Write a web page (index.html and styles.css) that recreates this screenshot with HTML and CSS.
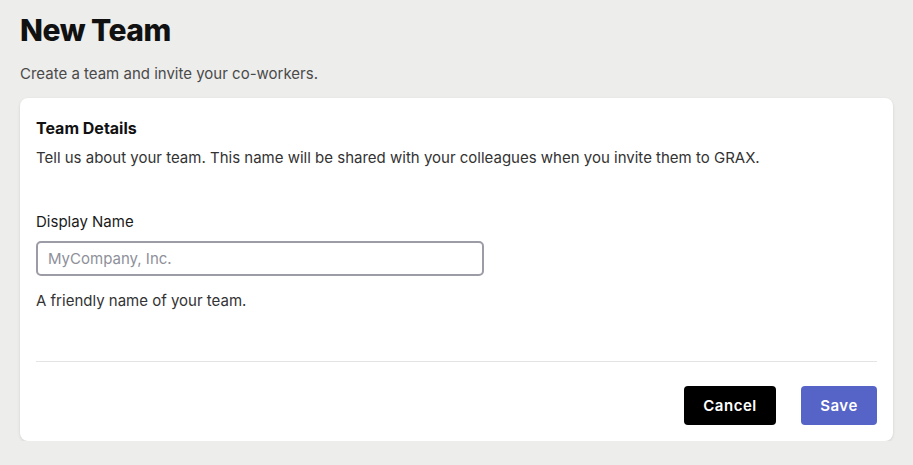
FILE: index.html
```html
<!DOCTYPE html>
<html>
<head>
<meta charset="utf-8">
<link rel="stylesheet" href="styles.css">
</head>
<body>
<main class="page">
  <h1 class="title">New Team</h1>
  <p class="subtitle">Create a team and invite your co-workers.</p>
  <section class="card">
    <h2 class="card-title">Team Details</h2>
    <p class="card-desc">Tell us about your team. This name will be shared with your colleagues when you invite them to GRAX.</p>
    <div class="field">
      <label class="label" for="name">Display Name</label>
      <input class="input" id="name" type="text" placeholder="MyCompany, Inc.">
      <p class="help">A friendly name of your team.</p>
    </div>
    <div class="divider"></div>
    <div class="actions">
      <button class="btn btn-cancel">Cancel</button>
      <button class="btn btn-save">Save</button>
    </div>
  </section>
</main>
</body>
</html>
```
FILE: styles.css
```css
* { box-sizing: border-box; }
html, body { margin: 0; padding: 0; }
body {
  background: #ededec;
  font-family: Inter, "Noto Sans", sans-serif;
  color: #1a1a1a;
}
.page {
  padding: 12px 20px 0 20px;
}
.title {
  margin: 0;
  font-size: 30px;
  font-weight: 800;
  letter-spacing: -0.5px;
  line-height: 36px;
  color: #111;
}
.subtitle {
  margin: 16px 0 0 0;
  font-size: 15px;
  line-height: 20px;
  color: #4a4a4a;
}
.card {
  margin-top: 14px;
  background: #fff;
  border-radius: 8px;
  box-shadow: 0 1px 3px rgba(0,0,0,0.12);
  padding: 19px 16px 16px 16px;
}
.card-title {
  margin: 0;
  font-size: 16px;
  font-weight: 700;
  line-height: 22px;
  color: #111;
}
.card-desc {
  margin: 9px 0 0 0;
  font-size: 15px;
  line-height: 20px;
  color: #333;
}
.field {
  margin-top: 44px;
  display: flex;
  flex-direction: column;
  align-items: flex-start;
}
.label {
  font-size: 15px;
  line-height: 20px;
  color: #1a1a1a;
}
.input {
  margin-top: 9px;
  width: 448px;
  height: 35px;
  border: 2px solid #9b9ca6;
  border-radius: 5px;
  padding: 0 10px;
  font-family: inherit;
  font-size: 15px;
  color: #222;
  outline: none;
}
.input::placeholder { color: #8e909a; }
.help {
  margin: 15px 0 0 0;
  font-size: 15px;
  line-height: 20px;
  color: #333;
}
.divider {
  margin-top: 50px;
  height: 1px;
  background: #e4e4e4;
}
.actions {
  margin-top: 24px;
  display: flex;
  justify-content: flex-end;
  gap: 25px;
}
.btn {
  height: 39px;
  border: none;
  border-radius: 4px;
  font-family: inherit;
  font-size: 15px;
  font-weight: 600;
  letter-spacing: 0.5px;
  color: #fff;
  cursor: pointer;
}
.btn-cancel {
  background: #000;
  width: 92px;
}
.btn-save {
  background: #5664c8;
  width: 76px;
}
```
